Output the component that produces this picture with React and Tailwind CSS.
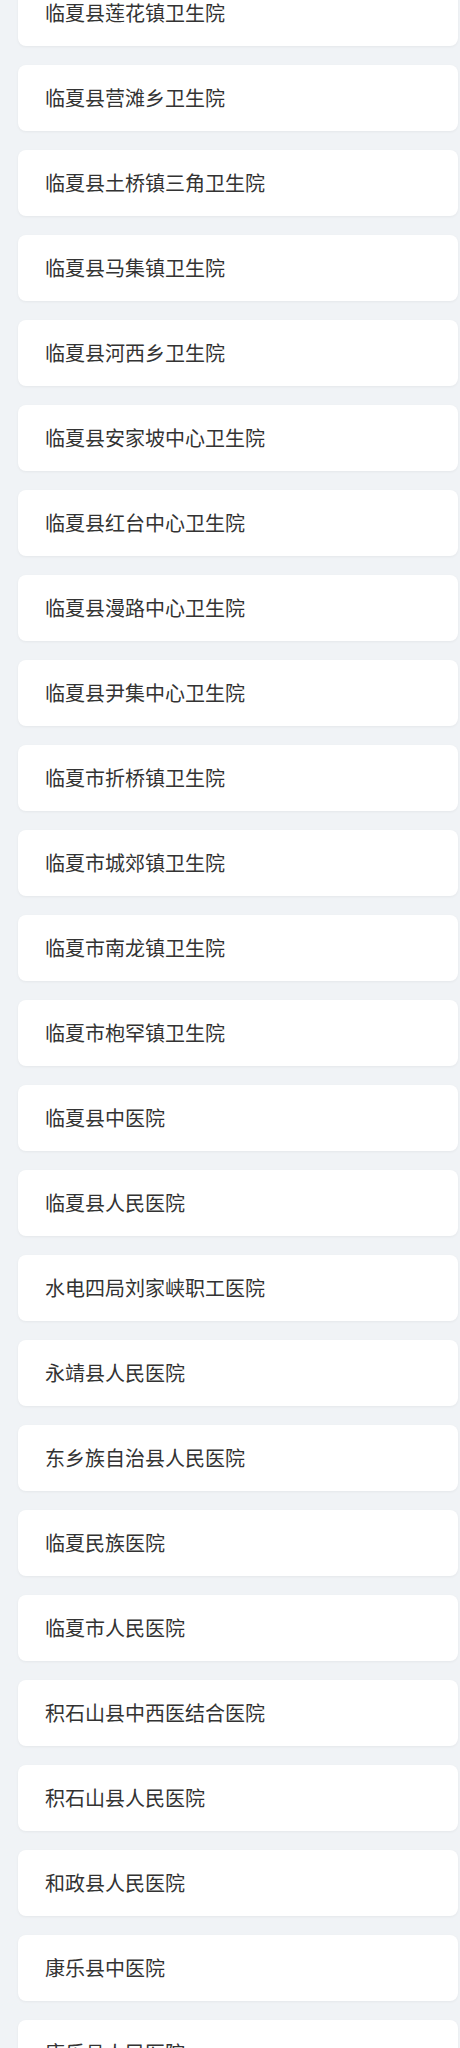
import React from "react";

const hospitals = [
  "临夏县莲花镇卫生院",
  "临夏县营滩乡卫生院",
  "临夏县土桥镇三角卫生院",
  "临夏县马集镇卫生院",
  "临夏县河西乡卫生院",
  "临夏县安家坡中心卫生院",
  "临夏县红台中心卫生院",
  "临夏县漫路中心卫生院",
  "临夏县尹集中心卫生院",
  "临夏市折桥镇卫生院",
  "临夏市城郊镇卫生院",
  "临夏市南龙镇卫生院",
  "临夏市枹罕镇卫生院",
  "临夏县中医院",
  "临夏县人民医院",
  "水电四局刘家峡职工医院",
  "永靖县人民医院",
  "东乡族自治县人民医院",
  "临夏民族医院",
  "临夏市人民医院",
  "积石山县中西医结合医院",
  "积石山县人民医院",
  "和政县人民医院",
  "康乐县中医院",
  "康乐县人民医院",
];

const App = () => {
  return (
    <div className="h-[2048px] overflow-hidden bg-[#f0f3f6] font-['Noto_Sans_CJK_SC','Noto_Sans',sans-serif]">
      <div className="-mt-[20px] ml-[18px] mr-[2px] flex flex-col gap-[19px]">
        {hospitals.map((name) => (
          <div
            key={name}
            className="h-[66px] flex items-center pl-[27px] bg-white rounded-[8px] shadow-[0_1px_3px_rgba(0,0,0,0.05)] text-[20px] text-[#333]"
          >
            {name}
          </div>
        ))}
      </div>
    </div>
  );
};

export default App;
